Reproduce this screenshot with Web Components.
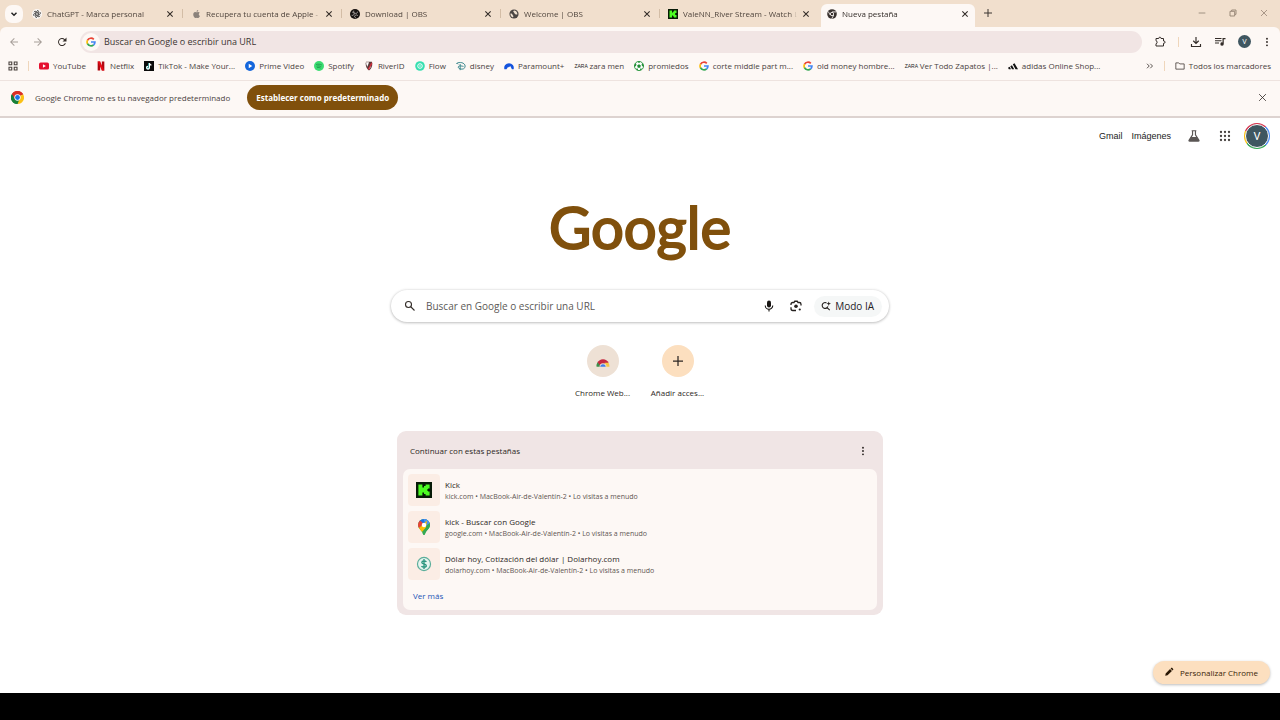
<!DOCTYPE html>
<html lang="es">
<head>
<meta charset="utf-8">
<title>Nueva pestaña</title>
<style>
html, body { margin: 0; height: 100%; }
body { font-family: "Open Sans", "Noto Sans", sans-serif; font-size: 8px; color: #3b3431; background: #fff; }
</style>
</head>
<body>
<browser-window></browser-window>
<script>
const ICONS = {
  chevron: ['0 0 12 12', '<path d="M3 4.5l3 3 3-3" fill="none" stroke="#222" stroke-width="1.7"/>'],
  close: ['0 0 12 12', '<path d="M2 2l8 8M10 2l-8 8" fill="none" stroke="currentColor" stroke-width="1.6"/>'],
  thinClose: ['0 0 12 12', '<path d="M1.500 1.500l9 9M10.500 1.500l-9 9" fill="none" stroke="currentColor" stroke-width="1.1"/>'],
  plus: ['0 0 12 12', '<path d="M6 0v12M0 6h12" fill="none" stroke="currentColor" stroke-width="1.5"/>'],
  gpt: ['0 0 24 24', '<circle cx="12" cy="12" r="12" fill="#fbf8f6"/><g fill="none" stroke="#444" stroke-width="1.9"><path d="M12 3.2a4.4 4.4 0 0 1 4.4 4.4v5.2L12 15.4"/><path d="M12 3.2a4.4 4.4 0 0 1 4.4 4.4v5.2L12 15.4" transform="rotate(60 12 12)"/><path d="M12 3.2a4.4 4.4 0 0 1 4.4 4.4v5.2L12 15.4" transform="rotate(120 12 12)"/><path d="M12 3.2a4.4 4.4 0 0 1 4.4 4.4v5.2L12 15.4" transform="rotate(180 12 12)"/><path d="M12 3.2a4.4 4.4 0 0 1 4.4 4.4v5.2L12 15.4" transform="rotate(240 12 12)"/><path d="M12 3.2a4.4 4.4 0 0 1 4.4 4.4v5.2L12 15.4" transform="rotate(300 12 12)"/></g>'],
  apple: ['0 0 24 24', '<path fill="#8b827b" d="M18.7 12.7c0-2.500 2-3.700 2.100-3.800-1.100-1.700-2.900-1.900-3.600-1.900-1.500-.2-3 .9-3.700.9-.8 0-2-.9-3.200-.9-1.700 0-3.200 1-4.100 2.400-1.700 3-.4 7.500 1.300 9.900.8 1.200 1.800 2.500 3.100 2.500 1.200-.1 1.700-.8 3.200-.8s1.900.8 3.200.8 2.200-1.200 3-2.400c.9-1.400 1.300-2.700 1.300-2.800-.1 0-2.600-1-2.600-3.900zM16.300 5.400c.7-.8 1.100-1.900 1-3.100-1 .1-2.200.7-2.900 1.500-.6.7-1.200 1.900-1 3 1.100.1 2.200-.6 2.900-1.400z"/>'],
  obs: ['0 0 24 24', '<circle cx="12" cy="12" r="12" fill="#16110f"/><g fill="none" stroke="#d9d2ce" stroke-width="1.6"><path d="M9 4c-1 4 1 6 4 6.500 3 .6 5-1 5-4"/><path d="M19 16c-3-3-6-2-7.500.5-1.300 2.500 0 4 3 4.500"/><path d="M4 15c4 1 6-1 6-4S7 7 5 8"/></g>'],
  globe: ['0 0 24 24', '<circle cx="12" cy="12" r="11" fill="#4b4644"/><path fill="#efe0d0" d="M13 3.500c-3 .6-3.500 2.700-1.500 4.500 2 1.500 1 3 3 4 2 .8 3 2 5.500 1 .6-4-2-8.500-7-9.500zM3.500 11c3 0 4.500 1 5 3s2.500 2 2 4-1.500 2.500-3 1.500c-3-2-4.500-5-4-8.500z"/>'],
  kick: ['0 0 20 20', '<path fill="#071a06" d="M0 0h20v20H0z"/><path fill="#4dfb22" d="M3 3h5v4h2V5h2V3h5v5h-2v1h-1v2h1v1h2v5h-5v-2h-2v-2H8v4H3z"/>'],
  chromeDark: ['0 0 24 24', '<circle cx="12" cy="12" r="11.500" fill="#39322f"/><circle cx="12" cy="12" r="4" fill="#39322f" stroke="#fdf8f5" stroke-width="2"/><path d="M12 7h10M7.700 14.500L3 6M16.300 14.500L11.500 23" stroke="#fdf8f5" stroke-width="2" fill="none"/>'],
  chrome: ['0 0 24 24', '<path fill="#d93025" d="M12 12L1.600 6A12 12 0 0 1 22.400 6z"/><path fill="#fbc116" d="M12 12L22.400 6A12 12 0 0 1 12 24z"/><path fill="#188038" d="M12 12L12 24A12 12 0 0 1 1.600 6z"/><path fill="#d93025" d="M12 6.500h10.600A12 12 0 0 0 1.600 6l5.600 9z"/><path fill="#188038" d="M1.600 6l5.700 9 8 1L12 24A12 12 0 0 1 1.600 6z"/><circle cx="12" cy="12" r="5.800" fill="#fff"/><circle cx="12" cy="12" r="4.400" fill="#1a73e8"/>'],
  back: ['0 0 24 24', '<path fill="currentColor" d="M20 11H7.800l5.600-5.600L12 4l-8 8 8 8 1.400-1.400L7.800 13H20z"/>'],
  forward: ['0 0 24 24', '<path fill="currentColor" d="M4 11h12.200l-5.600-5.600L12 4l8 8-8 8-1.400-1.400 5.600-5.600H4z"/>'],
  reload: ['0 0 24 24', '<path fill="currentColor" d="M17.700 6.300A8 8 0 1 0 19.800 14.500h-2.300A6 6 0 1 1 16.200 7.800L13 11h8V3z"/>'],
  google: ['0 0 48 48', '<g fill="none" stroke-width="8"><path stroke="#ea4335" d="M37.500 11.500A19 19 0 0 0 7 16"/><path stroke="#fbbc05" d="M7.500 15A19 19 0 0 0 7.500 33"/><path stroke="#34a853" d="M7 32a19 19 0 0 0 29.500 6"/><path stroke="#4285f4" d="M24 24h19c0 6-2.500 11-7 14.500"/></g>'],
  ext: ['0 0 24 24', '<path fill="none" stroke="currentColor" stroke-width="2" d="M4 5h5.500V4.200a2.300 2.300 0 0 1 4.500 0V5h5v5h.8a2.300 2.300 0 0 1 0 4.600H19V20H4v-4.500c3-.2 3-5.800 0-6z"/>'],
  download: ['0 0 24 24', '<path fill="none" stroke="currentColor" stroke-width="2.300" d="M12 2v13M6.500 9.500L12 15l5.500-5.500M3 16v5h18v-5"/>'],
  media: ['0 0 24 24', '<path fill="currentColor" d="M2 4h13v2.200H2zM2 8.500h13v2.200H2zM2 13h8v2.200H2zM17 4h6v2.300h-3.500V16a3.400 3.400 0 1 1-2.500-3.200z"/>'],
  kebab: ['0 0 24 24', '<g fill="currentColor"><circle cx="12" cy="4" r="2.300"/><circle cx="12" cy="12" r="2.300"/><circle cx="12" cy="20" r="2.300"/></g>'],
  grid4: ['0 0 20 20', '<path fill="none" stroke="currentColor" stroke-width="2.200" d="M2 2h5.500v5.500H2zM12.500 2H18v5.500h-5.500zM2 12.500h5.500V18H2zM12.500 12.500H18V18h-5.500z"/>'],
  youtube: ['0 0 24 24', '<rect x="0" y="3.500" width="24" height="17" rx="4" fill="#e5102f"/><path fill="#fff" d="M9.500 8v8l7-4z"/>'],
  netflix: ['0 0 24 24', '<path fill="#b1060f" d="M4 1h6v22H4zM14 1h6v22h-6z"/><path fill="#e50914" d="M4 1h6l10 22h-6z"/>'],
  tiktok: ['0 0 24 24', '<path fill="#0b0b0b" d="M0 0h24v24H0z"/><g fill="none" stroke-width="2.800"><path stroke="#25f4ee" d="M12.200 4.500v11a3 3 0 1 1-3-3"/><path stroke="#fff" d="M13 5v11a3.300 3.300 0 1 1-3.300-3.300M13 5c.5 3 2.500 4.500 5 4.500"/></g>'],
  prime: ['0 0 24 24', '<circle cx="12" cy="12" r="12" fill="#1466dc"/><path fill="#fff" d="M9 6.500v11l8.500-5.500z"/>'],
  spotify: ['0 0 24 24', '<circle cx="12" cy="12" r="12" fill="#3bdc72"/><g fill="none" stroke="#1c8d45" stroke-width="1.800"><path d="M5 8.500c5-1.500 10-1 14 1.200M6 12.500c4-1.200 8-.8 11.500 1.200M7 16c3.500-.9 6.500-.5 9 1"/></g>'],
  river: ['0 0 24 24', '<path fill="#5a3a3a" d="M5 2h14l1 4c0 8-3 13-8 17C7 19 4 14 4 6z"/><path fill="#fff" d="M5 3H12l-4 11C6 10.500 5 7 5 3z"/><path fill="#d42a3a" d="M18 3L9 19l3 2.500L19.500 7z"/><path fill="#fff" d="M15 14l-3 5.500c2-1.700 3.500-4 4.500-6.500z"/>'],
  flow: ['0 0 24 24', '<circle cx="12" cy="12" r="11.500" fill="#36dfb0"/><circle cx="12" cy="12" r="5.500" fill="none" stroke="#fff" stroke-width="2.300"/><circle cx="12" cy="12" r="1.800" fill="#fff"/>'],
  disney: ['0 0 24 24', '<g fill="none" stroke="#2c7f86" stroke-width="2.200"><path d="M1 6c8-5 20-2 21 6 .5 6-6 9-12 7-4-1.400-6-4-4-6 3-2 8-1 12 0M10 7v15M2 5l3 3"/></g>'],
  paramount: ['0 0 24 24', '<path fill="#1453dd" d="M1 20A11.500 11.500 0 1 1 23 20h-4l-4-8-3 4-2-2-4 6z"/><path fill="#fff" d="M9 19l4-6 3 7h-2l-1-3-2 3z"/>'],
  ball: ['0 0 24 24', '<circle cx="12" cy="12" r="11" fill="#fff" stroke="#26963b" stroke-width="2.200"/><path fill="#1f8c35" d="M12 7.500l4.500 3.300-1.700 5.200H9.200l-1.700-5.200zM8 1.500h8L12 5zM1 10l3.500-5L6 9.500 2.500 14zM23 10l-3.500-5L18 9.500l3.500 4.500zM4 18.500l5-.5 1 5zM20 18.500l-5-.5-1 5z"/>'],
  adidas: ['0 0 24 24', '<path fill="#111" d="M0 16l4-2.300L7.200 19.500H2zM5.500 12.500l4-2.300 5.300 9.300H9.600zM11.500 7.500l4.200-2.300L24 19.500h-6z"/>'],
  more: ['0 0 16 12', '<path fill="none" stroke="currentColor" stroke-width="1.800" d="M2 1.500L6.500 6 2 10.500M8.500 1.500L13 6l-4.500 4.500"/>'],
  folder: ['0 0 24 24', '<path fill="none" stroke="currentColor" stroke-width="2" d="M2 4.500h7l2.500 2.500H22v12.500H2z"/>'],
  flask: ['0 0 24 24', '<path fill="none" stroke="#5a5654" stroke-width="2" d="M8 3h8M9.500 3v7L3.500 19.500q-.5 1.500 1 1.500h15q1.500 0 1-1.500L14.500 10V3"/><path fill="#5a5654" d="M7 13.500h10l4 7H3z"/>'],
  grid9: ['0 0 24 24', '<g fill="#45403e"><circle cx="4" cy="4" r="2.300"/><circle cx="12" cy="4" r="2.300"/><circle cx="20" cy="4" r="2.300"/><circle cx="4" cy="12" r="2.300"/><circle cx="12" cy="12" r="2.300"/><circle cx="20" cy="12" r="2.300"/><circle cx="4" cy="20" r="2.300"/><circle cx="12" cy="20" r="2.300"/><circle cx="20" cy="20" r="2.300"/></g>'],
  search: ['0 0 24 24', '<g fill="none" stroke="currentColor" stroke-width="2.200"><circle cx="9" cy="9" r="6"/><path d="M13.500 13.500l7.500 7.500"/></g>'],
  mic: ['0 0 24 24', '<rect x="8" y="1" width="8" height="14" rx="4" fill="#171412"/><path fill="none" stroke="#171412" stroke-width="2.200" d="M4.500 11a7.500 7.500 0 0 0 15 0M12 18.500V23"/>'],
  lens: ['0 0 24 24', '<g fill="none" stroke="#25211f" stroke-width="2.600"><path d="M2 10V8.500Q2 5 5.500 5H8l1.500-2.500h5L16 5h2.500Q22 5 22 8.500V11M2 14.500v2.500Q2 21 5.500 21H12"/></g><circle cx="12" cy="12.500" r="3.600" fill="#25211f"/><circle cx="19.500" cy="19" r="2.200" fill="#25211f"/>'],
  ai: ['0 0 24 24', '<path fill="none" stroke="#25211f" stroke-width="2.700" d="M13 4.500A7 7 0 1 0 16.500 13M14.500 16l6.500 6"/><path fill="#25211f" d="M18.500 1l1.400 4L24 6.500l-4.100 1.500-1.400 4-1.400-4L13 6.500 17.100 5z"/>'],
  store: ['0 0 24 24', '<path fill="#c5283f" d="M2.500 15A10.500 10.500 0 0 1 21.500 15L17 20H6z"/><path fill="#3b8f4b" d="M2.500 14A12 12 0 0 0 1 22h8z"/><path fill="#f6c744" d="M15 15h6.500a12 12 0 0 1 1.500 7h-9z"/><path fill="#f0e2d4" d="M6 22a6 6 0 0 1 12 0z"/><path fill="#3f7fe8" d="M7.500 22a4.500 4.500 0 0 1 9 0z"/>'],
  pin: ['0 0 24 32', '<clipPath id="c"><path d="M12 0a12 12 0 0 1 12 12c0 8-8 10-10 18q-2 4-4 0C8 22 0 20 0 12A12 12 0 0 1 12 0z"/></clipPath><g clip-path="url(#c)"><path fill="#34a853" d="M0 0h24v32H0z"/><path fill="#1a73e8" d="M0-4h24L4 18z"/><path fill="#ea4335" d="M-3 4L3 2l8 7-10 11z"/><path fill="#4b93f4" d="M11 0h14v8l-9 5z"/><path fill="#fbbc04" d="M1 19L18 3l-2 14-9 10z"/><path fill="#34a853" d="M24 6v26H6l10-14z"/></g><circle cx="12" cy="12" r="4.500" fill="#fff"/>'],
  dollar: ['0 0 24 24', '<circle cx="12" cy="12" r="9.800" fill="#e5f4ef" stroke="#5cae9b" stroke-width="1.800"/><path fill="none" stroke="#2d9780" stroke-width="2" d="M15.500 9c-1-2-6.800-2.200-6.800.6 0 3.200 6.800 1.600 6.800 5 0 3-6.300 2.600-7.200.4M12 4.500v15"/>'],
  pencil: ['0 0 24 24', '<path fill="#2a1805" d="M3 21l1-5.500L14.500 5l4.500 4.500L8.500 20zM15.800 3.700l1.700-1.700q1-1 2 0l2.500 2.500q1 1 0 2l-1.700 1.700z"/>'],
  min: ['0 0 12 12', '<path d="M1 6h10" stroke="currentColor" stroke-width="1.200"/>'],
  restore: ['0 0 12 12', '<path d="M1.500 3.500h7v7h-7zM4 3V1.500h6.500V8H9" fill="none" stroke="currentColor" stroke-width="1.300"/>']
};

/* Shared base: renders html() and css() into an open shadow root. */
class Base extends HTMLElement {
  connectedCallback() {
    if (this.shadowRoot) return;
    this.attachShadow({ mode: 'open' }).innerHTML = `<style>
      *{box-sizing:border-box}
      :host{box-sizing:border-box}
      button{font:inherit;color:inherit;border:0;background:none;padding:0;margin:0;display:flex;align-items:center;justify-content:center}
      a{color:inherit;text-decoration:none}
      ${this.css()}</style>${this.html()}`;
  }
  css() { return ''; }
  html() { return '<slot></slot>'; }
}

customElements.define('ui-icon', class extends Base {
  css() { return ':host{display:block;flex:none;width:var(--size,10px);height:var(--size,10px)} svg{display:block;width:100%;height:100%}'; }
  html() {
    const [box, body] = ICONS[this.getAttribute('name')];
    return `<svg viewBox="${box}" aria-hidden="true">${body}</svg>`;
  }
});

customElements.define('user-avatar', class extends Base {
  css() { return `:host{display:flex;flex:none;align-items:center;justify-content:center;width:13px;height:13px;border-radius:50%;background:#3f5660;color:#fff;font-size:7px;font-family:Roboto,sans-serif}
    :host([large]){width:26px;height:26px;font-size:11px;padding:1px;
    background:conic-gradient(#d5304a 0 12%,#4285f4 12% 38%,#34a853 38% 65%,#fbbc05 65% 82%,#d5304a 82%)}
    :host([large]) span{display:flex;align-items:center;justify-content:center;width:100%;height:100%;border-radius:50%;background:#3f5660;border:1px solid #fff}`; }
  html() { return '<span><slot></slot></span>'; }
});

customElements.define('browser-tab', class extends Base {
  css() { return `:host{position:relative;display:flex;align-items:center;gap:5px;flex:0 1 154px;min-width:0;height:23px;margin-right:5px;padding:0 6px 4px 6px;color:#51463e}
    :host::after{content:"";position:absolute;right:-3px;top:5px;width:1px;height:9px;background:#d3bda6}
    :host([active]){background:#fdf8f5;border-radius:6px 6px 0 0;color:#332c28}
    :host([active])::after,:host([last])::after{display:none}
    .t{flex:1;min-width:0;overflow:hidden;white-space:nowrap;line-height:12px;-webkit-mask-image:linear-gradient(90deg,#000 94%,transparent);mask-image:linear-gradient(90deg,#000 94%,transparent)}
    button{--size:8px;color:#332c28}`; }
  html() { return `<ui-icon name="${this.getAttribute('icon')}"></ui-icon><span class="t"><slot></slot></span><button aria-label="Cerrar"><ui-icon name="close"></ui-icon></button>`; }
});

customElements.define('tab-strip', class extends Base {
  css() { return `:host{display:flex;align-items:flex-end;height:27px;background:#f1dfcd;padding-left:5px}
    .menu{width:18px;height:18px;border-radius:7px;background:#fdf8f5;margin:0 3px 4px 0;--size:10px}
    .tabs{display:flex;flex:0 1 954px;min-width:0}
    .new{--size:8px;margin:0 0 10px 4px}
    .win{display:flex;margin-left:auto;padding:0 12px 10px 0;gap:23px;--size:8px;color:#8e7d6e}`; }
  html() { return `<button class="menu" aria-label="Buscar pestañas"><ui-icon name="chevron"></ui-icon></button>
    <div class="tabs">
    <browser-tab icon="gpt">ChatGPT - Marca personal</browser-tab>
    <browser-tab icon="apple">Recupera tu cuenta de Apple -</browser-tab>
    <browser-tab icon="obs">Download | OBS</browser-tab>
    <browser-tab icon="globe">Welcome | OBS</browser-tab>
    <browser-tab icon="kick" last>ValeNN_River Stream - Watch L</browser-tab>
    <browser-tab icon="chromeDark" active>Nueva pestaña</browser-tab></div>
    <button class="new" aria-label="Nueva pestaña"><ui-icon name="plus"></ui-icon></button>
    <div class="win"><button aria-label="Minimizar"><ui-icon name="min"></ui-icon></button><button aria-label="Restaurar"><ui-icon name="restore"></ui-icon></button><button aria-label="Cerrar ventana"><ui-icon name="thinClose"></ui-icon></button></div>`; }
});

customElements.define('tool-bar', class extends Base {
  css() { return `:host{display:flex;align-items:center;height:29px;padding:0 8px;background:#fdf8f5;border-radius:6px 6px 0 0;--size:12px;color:#332c28}
    .nav{display:flex;gap:12px;margin-right:12px}
    .dim{color:#a79f9a}
    .box{display:flex;align-items:center;flex:1;height:22px;border-radius:11px;background:#f1e5e4;padding-left:2px;gap:4px}
    .g{width:18px;height:18px;border-radius:50%;background:#fdf8f5;--size:10px}
    input{flex:1;min-width:0;border:0;background:none;outline:0;padding:0;font:9px "Open Sans",sans-serif;color:#3b3431}
    input::placeholder{color:#3b3431;opacity:1}
    .right{display:flex;align-items:center;gap:12px;margin-left:12px}
    .k{--size:10px;margin-left:-1px}
    i{width:1px;height:10px;background:#efd6bb;margin-right:-1px}`; }
  html() { return `<div class="nav"><button class="dim" aria-label="Atrás"><ui-icon name="back"></ui-icon></button><button class="dim" aria-label="Adelante"><ui-icon name="forward"></ui-icon></button><button aria-label="Recargar"><ui-icon name="reload"></ui-icon></button></div>
    <div class="box"><button class="g" aria-label="Información del sitio"><ui-icon name="google"></ui-icon></button><input aria-label="Barra de direcciones" placeholder="Buscar en Google o escribir una URL"></div>
    <div class="right"><button aria-label="Extensiones"><ui-icon name="ext"></ui-icon></button><i></i><button aria-label="Descargas"><ui-icon name="download"></ui-icon></button><button aria-label="Multimedia"><ui-icon name="media"></ui-icon></button><button aria-label="Perfil"><user-avatar>V</user-avatar></button><button class="k" aria-label="Menú"><ui-icon name="kebab"></ui-icon></button></div>`; }
});

customElements.define('book-mark', class extends Base {
  css() { return `:host{display:block;flex:none} a{display:flex;align-items:center;gap:4px;white-space:nowrap;line-height:12px}
    .z{width:11px;font:5px/12px "Liberation Sans",sans-serif;color:#222}`; }
  html() {
    const icon = this.getAttribute('icon');
    return `<a href="#">${icon ? `<ui-icon name="${icon}"></ui-icon>` : '<span class="z">ZARA</span>'}<slot></slot></a>`;
  }
});

customElements.define('bookmarks-bar', class extends Base {
  css() { return `:host{display:flex;align-items:center;height:25px;padding:0 9px 4px 8px;background:#fdf8f5;border-bottom:1px solid #eee3df;color:#4a423e}
    i{width:1px;height:10px;background:#efd6bb;margin:0 10px;flex:none}
    .list{display:flex;gap:10px;flex:1;min-width:0;overflow:hidden}
    .m{--size:8px}`; }
  html() { return `<button aria-label="Grupos"><ui-icon name="grid4"></ui-icon></button><i></i><div class="list">
    <book-mark icon="youtube">YouTube</book-mark><book-mark icon="netflix">Netflix</book-mark><book-mark icon="tiktok">TikTok - Make Your...</book-mark>
    <book-mark icon="prime">Prime Video</book-mark><book-mark icon="spotify">Spotify</book-mark><book-mark icon="river">RiverID</book-mark><book-mark icon="flow">Flow</book-mark>
    <book-mark icon="disney">disney</book-mark><book-mark icon="paramount">Paramount+</book-mark><book-mark>zara men</book-mark><book-mark icon="ball">promiedos</book-mark>
    <book-mark icon="google">corte middle part m...</book-mark><book-mark icon="google">old money hombre...</book-mark><book-mark>Ver Todo Zapatos |...</book-mark><book-mark icon="adidas">adidas Online Shop...</book-mark></div>
    <button class="m" aria-label="Más marcadores"><ui-icon name="more"></ui-icon></button><i></i><book-mark icon="folder">Todos los marcadores</book-mark>`; }
});

customElements.define('default-notice', class extends Base {
  css() { return `:host{display:flex;align-items:center;height:37px;padding:0 13px 2px 11px;background:#fdf8f5;border-bottom:2px solid #ddd3d0;color:#4a423e}
    p{margin:0 17px 0 11px;line-height:12px}
    .set{height:25px;padding:0 9px;border-radius:13px;background:#80500c;color:#fff;font-weight:700}
    .x{margin-left:auto;--size:9px;color:#332c28}`; }
  html() { return `<ui-icon name="chrome" style="--size:13px"></ui-icon><p>Google Chrome no es tu navegador predeterminado</p><button class="set">Establecer como predeterminado</button><button class="x" aria-label="Cerrar aviso"><ui-icon name="thinClose"></ui-icon></button>`; }
});

customElements.define('app-links', class extends Base {
  css() { return `:host{display:flex;align-items:center;justify-content:flex-end;height:38px;padding:0 10px 2px 0;font:9px "Liberation Sans",sans-serif;color:#222;--size:14px}
    a{margin-right:9px} .f{margin:0 18px 0 7px} .g{--size:12px;margin-right:13px}`; }
  html() { return `<a href="#">Gmail</a><a href="#">Imágenes</a><button class="f" aria-label="Labs"><ui-icon name="flask"></ui-icon></button><button class="g" aria-label="Aplicaciones"><ui-icon name="grid9"></ui-icon></button><button aria-label="Cuenta"><user-avatar large>V</user-avatar></button>`; }
});

customElements.define('search-box', class extends Base {
  css() { return `:host{display:flex;align-items:center;width:100%;max-width:498px;height:32px;border-radius:16px;background:#fff;box-shadow:0 0 3px #0002,0 1px 3px #0003;padding:0 7px 0 13px;--size:12px;color:#332c28}
    input{flex:1;min-width:0;border:0;outline:0;background:none;padding:0;margin:0 10px;font:10px "Open Sans",sans-serif}
    input::placeholder{color:#5c5957;opacity:1}
    .l{margin:0 12px 0 15px}
    .ai{height:21px;border-radius:11px;background:#f5f7f7;padding:0 8px 0 7px;gap:4px;font-size:10px;color:#25211f;--size:10px}`; }
  html() { return `<ui-icon name="search"></ui-icon><input aria-label="Buscar" placeholder="Buscar en Google o escribir una URL"><button aria-label="Buscar por voz"><ui-icon name="mic"></ui-icon></button><button class="l" aria-label="Buscar por imagen"><ui-icon name="lens"></ui-icon></button><button class="ai"><ui-icon name="ai"></ui-icon>Modo IA</button>`; }
});

customElements.define('short-cut', class extends Base {
  css() { return `:host{display:block;width:75px;color:#2d2724} a{display:flex;flex-direction:column;align-items:center;gap:10px;line-height:12px;white-space:nowrap}
    .c{display:flex;align-items:center;justify-content:center;width:32px;height:32px;border-radius:50%;background:var(--disc,#eee1d5)}`; }
  html() { return `<a href="#"><span class="c"><ui-icon name="${this.getAttribute('icon')}"></ui-icon></span><slot></slot></a>`; }
});

customElements.define('recent-item', class extends Base {
  css() { return `:host{display:block} a{display:flex;align-items:center;gap:5px}
    .i{display:flex;flex:none;align-items:center;justify-content:center;width:32px;height:32px;border-radius:4px;background:#fbede5;--size:16px}
    .t{display:flex;flex-direction:column;white-space:nowrap}
    b{font-weight:400;line-height:12px;color:#2d2724} small{font-size:7px;line-height:11px;color:#5e5652}`; }
  html() { return `<a href="#"><span class="i"><ui-icon name="${this.getAttribute('icon')}"></ui-icon></span><span class="t"><b>${this.getAttribute('heading')}</b><small><slot></slot></small></span></a>`; }
});

customElements.define('recent-tabs', class extends Base {
  css() { return `:host{display:block;width:100%;max-width:486px;border-radius:9px;background:#f0e5e5;padding:0 6px 5px}
    header{display:flex;align-items:center;justify-content:space-between;height:38px;padding:2px 9px 0 7px;--size:10px;color:#2d2724}
    h2{margin:0;font-size:8px;font-weight:400;line-height:12px}
    .p{display:flex;flex-direction:column;gap:5px;background:#fdf8f5;border-radius:7px;padding:5px 5px 8px}
    .v{align-self:flex-start;margin:5px 0 0 5px;line-height:12px;color:#1b55b5}`; }
  html() { return `<header><h2>Continuar con estas pestañas</h2><button aria-label="Opciones"><ui-icon name="kebab"></ui-icon></button></header>
    <div class="p"><recent-item icon="kick" heading="Kick">kick.com • MacBook-Air-de-Valentín-2 • Lo visitas a menudo</recent-item>
    <recent-item icon="pin" heading="kick - Buscar con Google">google.com • MacBook-Air-de-Valentín-2 • Lo visitas a menudo</recent-item>
    <recent-item icon="dollar" heading="Dólar hoy, Cotización del dólar | Dolarhoy.com">dolarhoy.com • MacBook-Air-de-Valentín-2 • Lo visitas a menudo</recent-item>
    <a class="v" href="#">Ver más</a></div>`; }
});

customElements.define('new-tab-page', class extends Base {
  css() { return `:host{position:relative;display:flex;flex-direction:column;flex:1;background:#fff}
    main{display:flex;flex-direction:column;align-items:center;padding:36px 16px 48px}
    h1{margin:0 0 28px;font:400 58px/70px Lato,sans-serif;color:#80500c;-webkit-text-stroke:2px #80500c}
    nav{display:flex;margin:23px 0 32px}
    .c{position:absolute;right:10px;bottom:9px;height:23px;padding:0 12px 1px 11px;gap:6px;border-radius:12px;background:#fcdfbf;color:#3a2408;box-shadow:0 1px 3px #0004}`; }
  html() { return `<app-links></app-links><main><h1>Google</h1><search-box></search-box>
    <nav><short-cut icon="store" style="--size:14px">Chrome Web...</short-cut><short-cut icon="plus" style="--disc:#fcdfbf">Añadir acces...</short-cut></nav>
    <recent-tabs></recent-tabs></main><button class="c"><ui-icon name="pencil"></ui-icon>Personalizar Chrome</button>`; }
});

customElements.define('browser-window', class extends Base {
  css() { return `:host{display:flex;flex-direction:column;min-height:100vh} .top{background:#f1dfcd} footer{height:27px;background:#000}`; }
  html() { return '<tab-strip></tab-strip><div class="top"><tool-bar></tool-bar></div><bookmarks-bar></bookmarks-bar><default-notice></default-notice><new-tab-page></new-tab-page><footer></footer>'; }
});
</script>
</body>
</html>
